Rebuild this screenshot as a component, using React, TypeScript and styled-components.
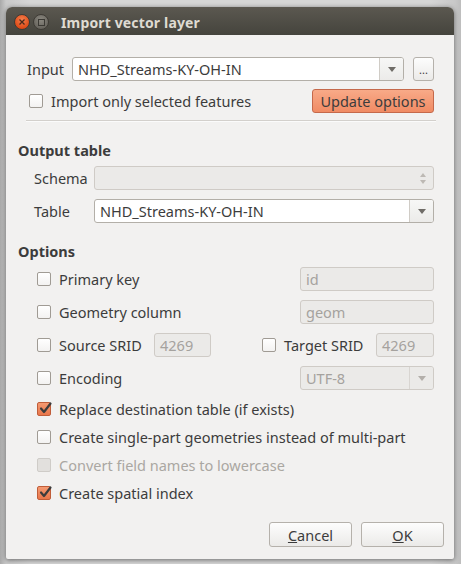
import React from 'react';
import styled, { createGlobalStyle, css } from 'styled-components';

const Global = createGlobalStyle`
  html, body { margin: 0; padding: 0; }
  body {
    width: 461px;
    height: 564px;
    overflow: hidden;
    background: linear-gradient(90deg, #a9a9a9 0px, #c9c9c9 6px, #d6d6d6 30px, #d6d6d6 430px, #c8c8c8 455px, #bdbdbd 461px);
    font-family: "Noto Sans", "DejaVu Sans", sans-serif;
    color: #3c3c3c;
  }
`;

const Desktop = styled.div`
  width: 461px;
  height: 564px;
  box-sizing: border-box;
  padding: 7px 0 0 6px;
`;

const Window = styled.div`
  width: 448px;
  height: 552px;
  display: flex;
  flex-direction: column;
  background: #f2f1f0;
  border-radius: 6px 6px 2px 2px;
  box-shadow: 0 1px 5px rgba(0, 0, 0, 0.5);
  overflow: hidden;
`;

const TitleBar = styled.div`
  flex: none;
  height: 28px;
  box-sizing: border-box;
  padding: 2px 0 0 8px;
  display: flex;
  align-items: center;
  background: linear-gradient(#5b5850, #45443d);
`;

const WinButton = styled.div<{ $close?: boolean }>`
  width: 16px;
  height: 16px;
  border-radius: 50%;
  margin-right: 3px;
  display: flex;
  align-items: center;
  justify-content: center;
  box-sizing: border-box;
  ${(p) =>
    p.$close
      ? css`
          background: radial-gradient(circle at 50% 35%, #f4804f, #dd4814 75%);
          border: 1px solid #3e3b35;
        `
      : css`
          background: radial-gradient(circle at 50% 35%, #8a877f, #67645d 75%);
          border: 1px solid #3e3b35;
        `}
`;

const TitleText = styled.div`
  margin-left: 9px;
  font-family: "Noto Sans", sans-serif;
  font-weight: 700;
  font-size: 14px;
  color: #dfdbd2;
  letter-spacing: 0.15px;
`;

const Content = styled.div`
  flex: 1;
  display: flex;
  flex-direction: column;
  padding: 0 20px 0 12px;
  font-size: 14.5px;
`;

const InputSection = styled.div`
  margin-top: 22px;
  padding-left: 9px;
  display: flex;
  flex-direction: column;
`;

const InputRow = styled.div`
  display: grid;
  grid-template-columns: 36px 1fr 21px;
  column-gap: 9px;
  height: 24px;
  align-items: center;
`;

const SelectedRow = styled.div`
  margin-top: 8px;
  height: 24px;
  display: flex;
  align-items: center;
  padding-left: 2px;
`;

const Separator = styled.div`
  margin: 7px -2px 0 -1px;
  height: 2px;
  border-top: 1px solid #d3d0cc;
  background: #fbfbfb;
  box-sizing: border-box;
`;

const GroupTitle = styled.div<{ $top: number }>`
  margin-top: ${(p) => p.$top}px;
  height: 20px;
  line-height: 20px;
  font-weight: 700;
`;

const FormRow = styled.div<{ $top: number }>`
  margin-top: ${(p) => p.$top}px;
  height: 24px;
  display: grid;
  grid-template-columns: 60px 1fr;
  align-items: center;
  padding-left: 16px;
`;

const Label = styled.span<{ $disabled?: boolean }>`
  white-space: nowrap;
  color: ${(p) => (p.$disabled ? '#aaa7a2' : '#3c3c3c')};
`;

const Field = styled.div<{ $disabled?: boolean }>`
  height: 24px;
  box-sizing: border-box;
  border: 1px solid ${(p) => (p.$disabled ? '#cfcbc6' : '#b3afa8')};
  border-radius: 3px;
  background: ${(p) => (p.$disabled ? '#ebeae8' : '#ffffff')};
  color: ${(p) => (p.$disabled ? '#a5a29e' : '#3c3c3c')};
  display: flex;
  align-items: center;
  overflow: hidden;
`;

const FieldText = styled.span`
  flex: 1;
  padding-left: 5px;
  white-space: nowrap;
  overflow: hidden;
`;

const ArrowPart = styled.div<{ $disabled?: boolean }>`
  width: 23px;
  height: 100%;
  flex: none;
  border-left: 1px solid ${(p) => (p.$disabled ? '#d8d5d1' : '#d0ccc6')};
  background: ${(p) => (p.$disabled ? '#ebeae8' : 'linear-gradient(#f7f7f6, #ecebe9)')};
  display: flex;
  align-items: center;
  justify-content: center;
`;

const SpinPart = styled.div`
  width: 20px;
  height: 100%;
  display: flex;
  flex-direction: column;
  align-items: center;
  justify-content: center;
  gap: 3px;
`;

const PushButton = styled.button<{ $accent?: boolean }>`
  height: 24px;
  box-sizing: border-box;
  border-radius: 3px;
  font-family: inherit;
  font-size: 14.5px;
  color: #3c3c3c;
  padding: 0;
  display: flex;
  align-items: center;
  justify-content: center;
  ${(p) =>
    p.$accent
      ? css`
          border: 1px solid #c5694b;
          background: linear-gradient(#f8aa88, #f08b64);
        `
      : css`
          border: 1px solid #b5b1ab;
          background: linear-gradient(#fdfdfd, #ebeae8);
        `}
`;

const BrowseButton = styled(PushButton)`
  width: 21px;
  align-items: flex-end;
  padding-bottom: 5px;
  font-size: 11px;
  line-height: 1;
`;

const UpdateButton = styled(PushButton)`
  margin-left: auto;
  width: 122px;
`;

const Box = styled.span<{ $checked?: boolean; $disabled?: boolean }>`
  position: relative;
  flex: none;
  width: 14px;
  height: 14px;
  box-sizing: border-box;
  border-radius: 2px;
  margin-right: 8px;
  ${(p) =>
    p.$checked
      ? css`
          border: 1px solid #c05d39;
          background: linear-gradient(#f49a72, #e9764a);
        `
      : p.$disabled
      ? css`
          border: 1px solid #cfccc8;
          background: #e2e0dd;
        `
      : css`
          border: 1px solid #a09b94;
          background: linear-gradient(#ffffff, #f3f2f1);
        `}
`;

const CheckMark = styled.svg`
  position: absolute;
  left: 1px;
  top: -1px;
  width: 13px;
  height: 13px;
  overflow: visible;
`;

const Check: React.FC<{ checked?: boolean; disabled?: boolean }> = ({ checked, disabled }) => (
  <Box $checked={checked} $disabled={disabled}>
    {checked && (
      <CheckMark viewBox="0 0 13 13">
        <path d="M2 6.5 L5 10 L11.5 1.5" fill="none" stroke="#3c3c3c" strokeWidth="2.2" strokeLinecap="round" strokeLinejoin="round" />
      </CheckMark>
    )}
  </Box>
);

const CheckLine = styled.div`
  display: flex;
  align-items: center;
  white-space: nowrap;
`;

const OptionsList = styled.div`
  display: flex;
  flex-direction: column;
  padding-left: 19px;
`;

const OptRow = styled.div<{ $top?: number }>`
  margin-top: ${(p) => p.$top ?? 9}px;
  height: 24px;
  display: grid;
  grid-template-columns: 1fr 134px;
  align-items: center;
`;

const SridRow = styled.div`
  margin-top: 9px;
  height: 24px;
  display: grid;
  grid-template-columns: 117px 57px 51px 114px 1fr;
  align-items: center;
`;

const FlagRow = styled.div<{ $top?: number }>`
  margin-top: ${(p) => p.$top ?? 0}px;
  height: 28px;
  display: flex;
  align-items: center;
`;

const ButtonBar = styled.div`
  margin-top: 15px;
  display: flex;
  justify-content: flex-end;
  gap: 9px;
  margin-right: -10px;
`;

const DialogButton = styled(PushButton)`
  width: 83px;
  height: 25px;
`;

const Arrow: React.FC<{ color?: string }> = ({ color = '#6f6c67' }) => (
  <svg width="8" height="5" viewBox="0 0 8 5">
    <path d="M0 0 H8 L4 5 Z" fill={color} />
  </svg>
);

const Tiny: React.FC<{ up?: boolean }> = ({ up }) => (
  <svg width="6" height="4" viewBox="0 0 6 4">
    <path d={up ? 'M0 4 H6 L3 0 Z' : 'M0 0 H6 L3 4 Z'} fill="#bdb9b4" />
  </svg>
);

export default function App() {
  return (
    <>
      <Global />
      <Desktop>
        <Window>
          <TitleBar>
            <WinButton $close>
              <svg width="6" height="6" viewBox="0 0 6 6">
                <path d="M0.5 0.5 L5.5 5.5 M5.5 0.5 L0.5 5.5" stroke="#4a2a1c" strokeWidth="1.3" />
              </svg>
            </WinButton>
            <WinButton>
              <svg width="7" height="7" viewBox="0 0 7 7">
                <rect x="0.5" y="0.5" width="6" height="6" fill="none" stroke="#3b3934" strokeWidth="1" />
              </svg>
            </WinButton>
            <TitleText>Import vector layer</TitleText>
          </TitleBar>
          <Content>
            <InputSection>
              <InputRow>
                <Label>Input</Label>
                <Field>
                  <FieldText>NHD_Streams-KY-OH-IN</FieldText>
                  <ArrowPart>
                    <Arrow />
                  </ArrowPart>
                </Field>
                <BrowseButton>...</BrowseButton>
              </InputRow>
              <SelectedRow>
                <Check />
                <Label>Import only selected features</Label>
                <UpdateButton $accent>Update options</UpdateButton>
              </SelectedRow>
              <Separator />
            </InputSection>

            <GroupTitle $top={18}>Output table</GroupTitle>
            <FormRow $top={6}>
              <Label>Schema</Label>
              <Field $disabled>
                <FieldText />
                <SpinPart>
                  <Tiny up />
                  <Tiny />
                </SpinPart>
              </Field>
            </FormRow>
            <FormRow $top={9}>
              <Label>Table</Label>
              <Field>
                <FieldText>NHD_Streams-KY-OH-IN</FieldText>
                <ArrowPart>
                  <Arrow />
                </ArrowPart>
              </Field>
            </FormRow>

            <GroupTitle $top={18}>Options</GroupTitle>
            <OptionsList>
              <OptRow $top={6}>
                <CheckLine>
                  <Check />
                  <Label>Primary key</Label>
                </CheckLine>
                <Field $disabled>
                  <FieldText>id</FieldText>
                </Field>
              </OptRow>
              <OptRow>
                <CheckLine>
                  <Check />
                  <Label>Geometry column</Label>
                </CheckLine>
                <Field $disabled>
                  <FieldText>geom</FieldText>
                </Field>
              </OptRow>
              <SridRow>
                <CheckLine>
                  <Check />
                  <Label>Source SRID</Label>
                </CheckLine>
                <Field $disabled>
                  <FieldText>4269</FieldText>
                </Field>
                <span />
                <CheckLine>
                  <Check />
                  <Label>Target SRID</Label>
                </CheckLine>
                <Field $disabled>
                  <FieldText>4269</FieldText>
                </Field>
              </SridRow>
              <OptRow>
                <CheckLine>
                  <Check />
                  <Label>Encoding</Label>
                </CheckLine>
                <Field $disabled>
                  <FieldText>UTF-8</FieldText>
                  <ArrowPart $disabled>
                    <Arrow color="#b3afaa" />
                  </ArrowPart>
                </Field>
              </OptRow>
              <FlagRow $top={5}>
                <Check checked />
                <Label>Replace destination table (if exists)</Label>
              </FlagRow>
              <FlagRow>
                <Check />
                <Label>Create single-part geometries instead of multi-part</Label>
              </FlagRow>
              <FlagRow>
                <Check disabled />
                <Label $disabled>Convert field names to lowercase</Label>
              </FlagRow>
              <FlagRow>
                <Check checked />
                <Label>Create spatial index</Label>
              </FlagRow>
            </OptionsList>

            <ButtonBar>
              <DialogButton>
                <u>C</u>ancel
              </DialogButton>
              <DialogButton>
                <u>O</u>K
              </DialogButton>
            </ButtonBar>
          </Content>
        </Window>
      </Desktop>
    </>
  );
}
